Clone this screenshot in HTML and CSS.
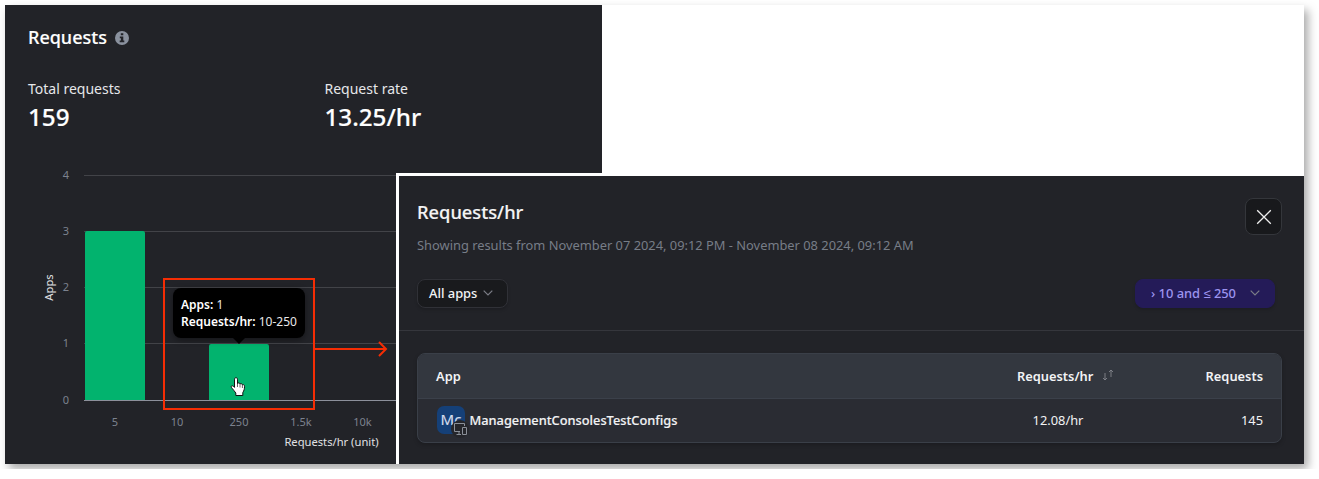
FILE: index.html
```
<!DOCTYPE html>
<html lang="en">
<head>
<meta charset="utf-8">
<title>Requests</title>
<link rel="stylesheet" href="styles.css">
</head>
<body>
<main class="stage">
  <section class="card">
    <header class="card-head">
      <h1 class="card-title">Requests</h1>
      <svg class="info" viewBox="0 0 14 14" aria-hidden="true"><circle cx="7" cy="7" r="7" fill="#8a919e"/><path fill="#222328" d="M5.8 2.3h2.5v2H5.8zM4.8 5.5h3.5v4h1v1.7H4.7V9.5h1.2V7.2H4.8z"/></svg>
    </header>
    <div class="stats">
      <div class="stat"><span class="stat-label">Total requests</span><strong class="stat-value">159</strong></div>
      <div class="stat"><span class="stat-label">Request rate</span><strong class="stat-value">13.25/hr</strong></div>
    </div>
    <svg class="chart" viewBox="0 155 392 309">
      <g class="grid-lines">
        <path d="M79 175.5H392M79 231.5H392M79 287.5H392M79 343.5H392"/>
      </g>
      <path class="bar" d="M80 400V233q0-2 2-2h56q2 0 2 2v167zM204 400v-54q0-2 2-2h56q2 0 2 2v54z"/>
      <path class="axis" d="M79 400.5H392"/>
      <g class="ticks-y">
        <text x="64" y="179">4</text><text x="64" y="235">3</text><text x="64" y="291">2</text><text x="64" y="347">1</text><text x="64" y="404">0</text>
      </g>
      <g class="ticks-x">
        <text x="110" y="426">5</text><text x="172" y="426">10</text><text x="234" y="426">250</text><text x="296" y="426">1.5k</text><text x="357.500" y="426">10k</text>
      </g>
      <text class="axis-title" transform="translate(48 287.500) rotate(-90)">Apps</text>
      <text class="axis-title" x="326.500" y="446">Requests/hr (unit)</text>
      <path fill="#fff" stroke="#111" stroke-width="1" stroke-linejoin="round" transform="translate(225 377)" d="M4.500 2.200C4.500.2 7.500.2 7.500 2.200V6.500C8 5.600 9.900 5.800 10 7C10.600 6.300 12.300 6.600 12.400 7.800C13.300 7.200 14.600 7.900 14.500 9.300C14.500 12.300 14 13.500 12.800 15.600V18.500H5.800V16C4.500 14.500 3.600 12.800 2 11.200C.2 9.200 2 8 3.500 9.400L4.500 10.400Z"/>
      <path stroke="#222" stroke-width=".7" fill="none" d="M232.500 383v4M235 384v3.500M237.400 385v3"/>
    </svg>
    <div class="tooltip"><div><b>Apps:</b> 1</div><div><b>Requests/hr:</b> 10-250</div></div>
    <svg class="callout" viewBox="0 0 226 132" aria-hidden="true"><path d="M1 1H151V131H1zM152 71H223M216 64l7 7-7 7"/></svg>
  </section>

  <section class="detail">
    <header class="detail-head">
      <div>
        <h2 class="detail-title">Requests/hr</h2>
        <p class="range">Showing results from November 07 2024, 09:12 PM - November 08 2024, 09:12 AM</p>
      </div>
      <button class="close" aria-label="Close"><svg viewBox="0 0 16 16"><path d="M1.200 1.200 14.800 14.800M14.800 1.200 1.200 14.800"/></svg></button>
    </header>
    <div class="filters">
      <button class="select">All apps<svg class="chevron" viewBox="0 0 10 6"><path d="M.7.7 5 5 9.300.7"/></svg></button>
      <button class="select select-active"><span>› 10 and ≤ 250</span><svg class="chevron" viewBox="0 0 10 6"><path d="M.7.7 5 5 9.300.7"/></svg></button>
    </div>
    <div class="table">
      <div class="row row-head">
        <span>App</span>
        <span class="rate-head">Requests/hr<svg class="sort" viewBox="0 0 12 12"><path d="M3 4V11M1 9 3 11 5 9M9 8V1M7 3 9 1 11 3"/></svg></span>
        <span class="num">Requests</span>
      </div>
      <div class="row row-body">
        <span class="app"><span class="avatar">Mc<svg class="device" viewBox="0 0 18 18"><circle cx="9" cy="9" r="9" fill="#25262b" stroke="none"/><path d="M9 11.500H3.500V3.500H13.500V6M5.500 14.500H10M8 11.500V14.500M11.500 7.500H15.500V14.500H11.500z"/></svg></span>ManagementConsolesTestConfigs</span>
        <span class="rate">12.08/hr</span>
        <span class="num">145</span>
      </div>
    </div>
  </section>
</main>
</body>
</html>
```
FILE: styles.css
```
* { box-sizing: border-box; }
body { margin: 0; background: #fff; font-family: "Noto Sans", sans-serif; color: #f2f3f5; overflow: hidden; }
h1, h2, p { margin: 0; }
button { font: inherit; color: inherit; padding: 0; }
.stage { position: relative; width: 1299px; height: 459px; margin: 5px; background: #fff; box-shadow: 4px 5px 9px rgba(0, 0, 0, .34); }
.card { position: relative; width: 597px; height: 459px; background: #222328; padding: 20px 0 0 23px; overflow: hidden; }
.card-head { display: flex; align-items: center; gap: 8px; height: 25px; }
.card-title { font-size: 18px; line-height: 25px; font-weight: 500; color: #fff; -webkit-text-stroke: .15px; }
.info { width: 14px; height: 14px; margin-top: 1px; }
.stats { display: grid; grid-template-columns: 296.500px 1fr; margin-top: 28px; }
.stat { display: flex; flex-direction: column; }
.stat-label { font-size: 14px; line-height: 22px; color: #e6e7ea; }
.stat-value { font-size: 24.200px; line-height: 34px; font-weight: 500; color: #fff; -webkit-text-stroke: .2px; }
.chart { display: block; width: 392px; height: 309px; margin: 21px 0 0 -23px; }
.grid-lines { stroke: #424348; }
.axis { stroke: #8c909b; }
.bar { fill: #02b36e; }
.chart text { font-size: 11px; fill: #7c828e; }
.ticks-y text { text-anchor: end; }
.ticks-x text, .chart .axis-title { text-anchor: middle; }
.chart .axis-title { font-size: 11.200px; fill: #e0e1e4; }
.tooltip { position: absolute; left: 168px; top: 283px; width: 132px; height: 50px; padding: 8px; border-radius: 8px; background: #000; color: #e8e8ea; font-size: 12px; line-height: 17px; white-space: nowrap; box-shadow: 0 2px 6px rgba(0, 0, 0, .4); }
.tooltip b { font-weight: 600; color: #fff; }
.tooltip::after { content: ""; position: absolute; left: 60px; top: 50px; border: 6px solid transparent; border-top-color: #000; border-bottom: 0; }
.callout { position: absolute; left: 158px; top: 273px; width: 226px; height: 132px; fill: none; stroke: #f52d04; stroke-width: 2; }
.detail { position: absolute; left: 391px; top: 168px; width: 908px; height: 291px; border: solid #fff; border-width: 3px 0 0 3px; background: #222328; padding-top: 22px; }
.detail-head { display: flex; justify-content: space-between; padding: 0 22px 0 18px; }
.detail-title { font-size: 18.300px; line-height: 28px; font-weight: 500; color: #f4f4f5; -webkit-text-stroke: .15px; }
.range { font-size: 12.870px; line-height: 20px; margin: 9px 0 1px; color: #777d87; }
.close { display: grid; place-items: center; width: 37px; height: 37px; border: 1px solid #34363b; border-radius: 8px; background: #18191c; }
.close svg { width: 16px; height: 16px; stroke: #eee; stroke-width: 1.300; fill: none; }
.filters { display: flex; justify-content: space-between; margin-top: 23px; padding: 0 29px 22px 18px; border-bottom: 1px solid #35363c; }
.select { display: flex; align-items: center; gap: 6px; width: 91px; height: 29px; padding: 0 0 1px 11px; border: 1px solid #303137; border-radius: 8px; background: #191a1d; font-size: 12.900px; font-weight: 500; box-shadow: 0 2px 3px rgba(0, 0, 0, .15); }
.select-active { width: 140px; padding: 0 14px 1px 15px; justify-content: space-between; border-color: #241b58; background: #241b58; color: #9c94ef; }
.chevron { width: 10px; height: 6px; fill: none; stroke: #7b7d86; stroke-width: 1.200; }
.table { margin: 22px 22px 0 18px; border: 1px solid #3a3f48; border-radius: 8px; overflow: hidden; background: #2a2c33; box-shadow: 0 2px 4px rgba(0, 0, 0, .2); font-size: 12.850px; }
.row { display: grid; grid-template-columns: 1fr 215px 153px; align-items: center; height: 43px; padding: 0 18px; }
.row-head { height: 45px; background: #33373f; border-bottom: 1px solid #3b404a; font-weight: 600; }
.row-body { height: 43px; padding-bottom: 2px; }
.rate-head { display: flex; align-items: center; gap: 9px; padding-left: 122px; white-space: nowrap; }
.sort { width: 12px; height: 12px; flex: none; stroke: #83868d; stroke-width: .9; fill: none; margin-top: -3px; }
.num { text-align: right; }
.app { display: flex; align-items: center; gap: 4.500px; padding-left: 1px; font-weight: 500; font-size: 12.800px; -webkit-text-stroke: .15px; }
.avatar { position: relative; display: grid; place-items: center; width: 28px; height: 28px; border-radius: 7px; background: #154078; color: #d5ddec; font-size: 15px; line-height: 26px; align-items: start; font-weight: 400; }
.device { position: absolute; left: 14px; top: 14px; width: 18px; height: 18px; fill: none; stroke: #8b9099; }
.rate { text-align: center; padding-left: 111px; }
```
